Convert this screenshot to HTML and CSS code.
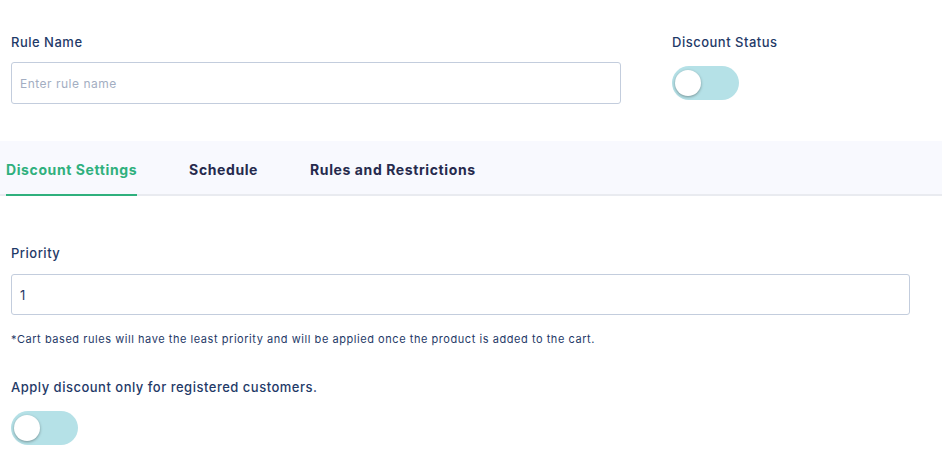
FILE: index.html
```html
<!DOCTYPE html>
<html lang="en">
<head>
<meta charset="utf-8">
<title>Discount Rule</title>
<link rel="stylesheet" href="styles.css">
</head>
<body>
<div class="page">
  <section class="top">
    <div class="field field-name">
      <label class="label" for="rule-name">Rule Name</label>
      <input id="rule-name" class="input" type="text" placeholder="Enter rule name">
    </div>
    <div class="field field-status">
      <span class="label">Discount Status</span>
      <span class="toggle"><span class="knob"></span></span>
    </div>
  </section>

  <nav class="tabs">
    <span class="tab active">Discount Settings</span>
    <span class="tab">Schedule</span>
    <span class="tab">Rules and Restrictions</span>
  </nav>

  <section class="settings">
    <div class="field">
      <label class="label" for="priority">Priority</label>
      <input id="priority" class="input input-wide" type="text" value="1">
      <p class="note">*Cart based rules will have the least priority and will be applied once the product is added to the cart.</p>
    </div>
    <div class="field field-reg">
      <span class="label">Apply discount only for registered customers.</span>
      <span class="toggle"><span class="knob"></span></span>
    </div>
  </section>
</div>
</body>
</html>
```

FILE: styles.css
```css
* { box-sizing: border-box; }

html, body {
  margin: 0;
  padding: 0;
  background: #ffffff;
  font-family: Inter, "Noto Sans", "Liberation Sans", sans-serif;
  color: #1f3a68;
}

.page {
  width: 942px;
  height: 451px;
  overflow: hidden;
}

.top {
  display: flex;
  gap: 51px;
  padding: 34px 0 0 11px;
  height: 141px;
}

.field {
  display: flex;
  flex-direction: column;
  align-items: flex-start;
}

.field-name { width: 610px; }

.label {
  font-size: 13px;
  line-height: 16px;
  font-weight: 500;
  letter-spacing: 0.5px;
  color: #1f3a68;
}

.input {
  margin-top: 12px;
  width: 100%;
  height: 42px;
  border: 1px solid #c3cddd;
  border-radius: 3px;
  padding: 0 8px;
  font-family: inherit;
  font-size: 12px;
  letter-spacing: 0.5px;
  color: #1f3a68;
  background: #fff;
  outline: none;
}

.input::placeholder { color: #a3aec2; }

.field-status .toggle { margin-top: 16px; }

.toggle {
  position: relative;
  display: block;
  width: 67px;
  height: 34px;
  border-radius: 17px;
  background: #b5e1e7;
}

.knob {
  position: absolute;
  left: 3px;
  top: 4px;
  width: 26px;
  height: 26px;
  border-radius: 50%;
  background: #ffffff;
  box-shadow: 0 1px 3px rgba(0, 0, 0, 0.35);
}

.tabs {
  display: flex;
  gap: 52px;
  padding-left: 6px;
  height: 55px;
  background: #f8f9fe;
  border-bottom: 2px solid #e9ebf0;
}

.tab {
  display: flex;
  align-items: center;
  font-size: 14px;
  font-weight: 700;
  letter-spacing: 0.6px;
  color: #262a4d;
  margin-bottom: -2px;
  border-bottom: 2px solid transparent;
  padding-top: 4px;
}

.tab.active {
  color: #2fb07d;
  border-bottom-color: #2fb07d;
}

.settings {
  padding: 49px 0 0 11px;
}

.input-wide {
  width: 899px;
  height: 41px;
  margin-top: 13px;
  font-size: 13px;
}

.note {
  margin: 17px 0 0;
  font-size: 11px;
  line-height: 14px;
  letter-spacing: 0.55px;
  color: #1f3a68;
}

.field-reg { margin-top: 33px; }

.field-reg .toggle { margin-top: 16px; }
```
